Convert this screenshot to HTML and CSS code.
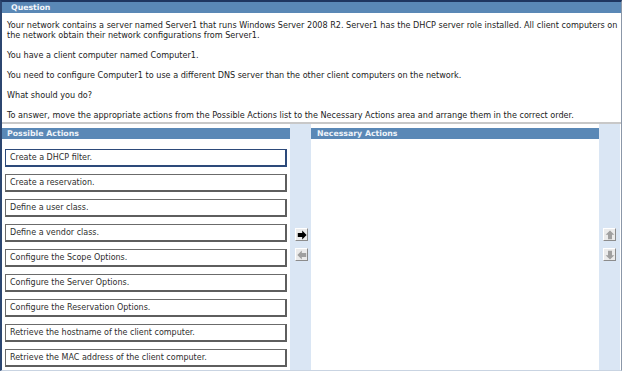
FILE: index.html
```html
<!DOCTYPE html>
<html lang="en">
<head>
<meta charset="utf-8">
<title>Question</title>
<link rel="stylesheet" href="styles.css">
</head>
<body>
<div class="window">
  <div class="qhead">Question</div>
  <div class="qbody">
    <p>Your network contains a server named Server1 that runs Windows Server 2008 R2. Server1 has the DHCP server role installed. All client computers on the network obtain their network configurations from Server1.</p>
    <p>You have a client computer named Computer1.</p>
    <p>You need to configure Computer1 to use a different DNS server than the other client computers on the network.</p>
    <p>What should you do?</p>
    <p>To answer, move the appropriate actions from the Possible Actions list to the Necessary Actions area and arrange them in the correct order.</p>
  </div>
  <div class="dnd">
    <div class="col">
      <div class="chead">Possible Actions</div>
      <ul class="items">
        <li class="item selected">Create a DHCP filter.</li>
        <li class="item">Create a reservation.</li>
        <li class="item">Define a user class.</li>
        <li class="item">Define a vendor class.</li>
        <li class="item">Configure the Scope Options.</li>
        <li class="item">Configure the Server Options.</li>
        <li class="item">Configure the Reservation Options.</li>
        <li class="item">Retrieve the hostname of the client computer.</li>
        <li class="item">Retrieve the MAC address of the client computer.</li>
      </ul>
    </div>
    <div class="gutter gutter-left">
      <span class="btn"><svg viewBox="0 0 10 10" class="ico on"><path d="M0.8 3h4.4V0.6L9.6 5 5.2 9.4V7H0.8z"/></svg></span>
      <span class="btn"><svg viewBox="0 0 10 10" class="ico off"><path d="M9.2 3H4.8V0.6L0.4 5 4.8 9.4V7H9.2z"/></svg></span>
    </div>
    <div class="col">
      <div class="chead chead-right">Necessary Actions</div>
    </div>
    <div class="gutter gutter-right">
      <span class="btn"><svg viewBox="0 0 10 10" class="ico off"><path d="M3 9.2V4.8H0.6L5 0.4 9.4 4.8H7V9.2z"/></svg></span>
      <span class="btn"><svg viewBox="0 0 10 10" class="ico off"><path d="M3 0.8v4.4H0.6L5 9.6 9.4 5.2H7V0.8z"/></svg></span>
    </div>
  </div>
</div>
</body>
</html>
```

FILE: styles.css
```css
html, body {
  margin: 0;
  padding: 0;
  background: #ffffff;
}

body {
  font-family: "DejaVu Sans", Verdana, sans-serif;
  font-size: 8px;
  color: #222222;
}

.window {
  width: 619px;
  border-top: 2px solid #1f3660;
  border-left: 2px solid #2c4670;
  border-right: 1px solid #8b97a8;
  border-bottom: 1px solid #c9d4e2;
}

.qhead {
  height: 11px;
  line-height: 11px;
  background: #5a88b6;
  color: #f4f7fb;
  font-weight: bold;
  font-size: 7.8px;
  padding-left: 9px;
}

.qbody {
  padding: 7px 0 2px 5px;
  border-bottom: 2px solid #c8c8c8;
  font-size: 8.1px;
}

.qbody p {
  margin: 0 0 10px 0;
  line-height: 10px;
}

.qbody p:last-child {
  margin-bottom: 0;
}

.dnd {
  display: grid;
  grid-template-columns: 288px 21px 288px 21px;
  height: 246px;
}

.col {
  padding-top: 4px;
  background: #ffffff;
}

.chead {
  height: 11px;
  line-height: 11px;
  background: #5a88b6;
  color: #eef3f9;
  font-weight: bold;
  font-size: 7.8px;
  padding-left: 5px;
}

.chead-right {
  padding-left: 6px;
}

.items {
  list-style: none;
  margin: 0;
  padding: 10px 0 0 3px;
  display: flex;
  flex-direction: column;
  gap: 7px;
}

.item {
  width: 275px;
  height: 15px;
  line-height: 15px;
  padding-left: 4px;
  border: 1px solid #6b6b6b;
  border-right: 2px solid #5e5e5e;
  border-bottom: 2px solid #5e5e5e;
  background: #ffffff;
  color: #2e2e2e;
  white-space: nowrap;
}

.item.selected {
  border-color: #2d4a7a;
}

.gutter {
  background: #dae6f4;
  display: flex;
  flex-direction: column;
  gap: 7px;
  padding-top: 104px;
}

.gutter-left {
  padding-left: 5px;
}

.gutter-right {
  padding-left: 4px;
}

.btn {
  box-sizing: border-box;
  width: 13px;
  height: 13px;
  background: #ebebeb;
  border: 1px solid #ffffff;
  border-right-color: #8c8c8c;
  border-bottom-color: #8c8c8c;
  display: flex;
  align-items: center;
  justify-content: center;
}

.ico {
  width: 10px;
  height: 10px;
}

.ico.on {
  fill: #000000;
}

.ico.off {
  fill: #a0a0a0;
}
```
